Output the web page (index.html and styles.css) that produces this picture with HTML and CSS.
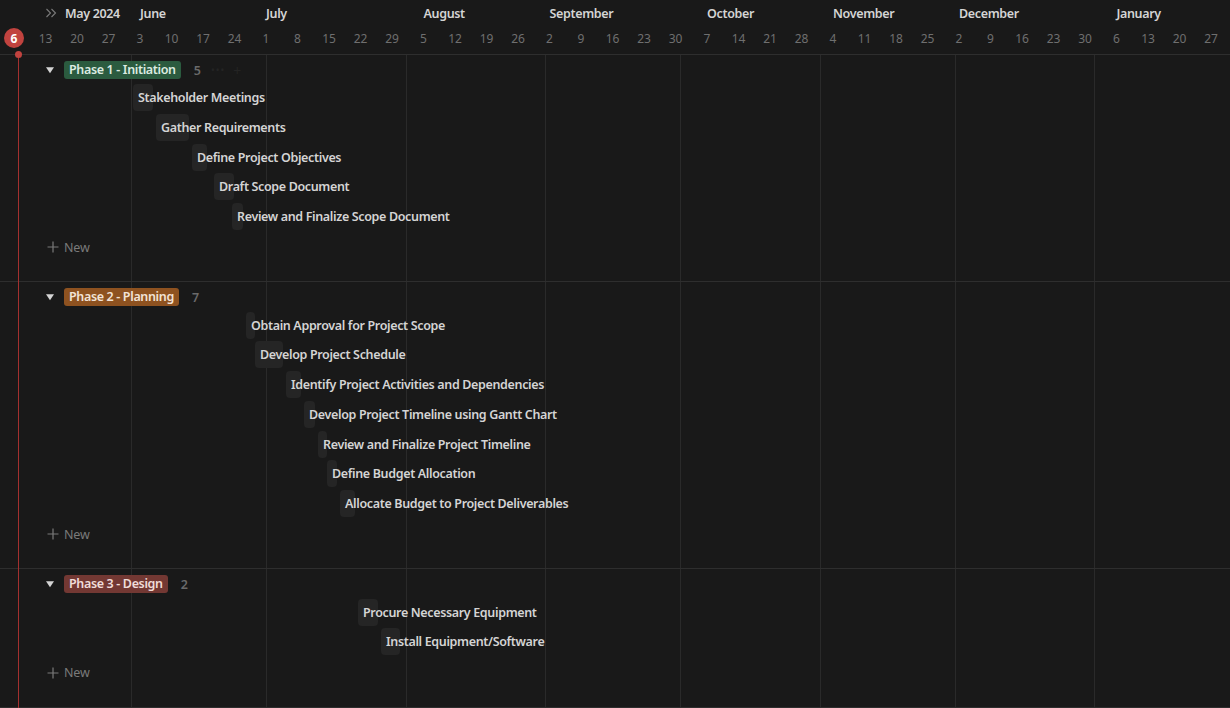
FILE: index.html
```html
<!DOCTYPE html>
<html lang="en">
<head>
<meta charset="utf-8">
<title>Timeline</title>
<link rel="stylesheet" href="styles.css">
</head>
<body>
<div class="app">
  <header class="header">
    <div class="months">
      <div class="month first" style="width:131px;padding-left:45px">
        <svg class="chev" width="12" height="12" viewBox="0 0 12 12"><path d="M1.5 2 L5.5 6 L1.5 10 M6.5 2 L10.5 6 L6.5 10" fill="none" stroke="#7a7a7a" stroke-width="1.1"/></svg>
        <span class="mlabel">May 2024</span>
      </div>
      <div class="month" style="width:135px;padding-left:9px"><span class="mlabel">June</span></div>
      <div class="month" style="width:139.5px;padding-left:0px"><span class="mlabel">July</span></div>
      <div class="month" style="width:139.5px;padding-left:18px"><span class="mlabel">August</span></div>
      <div class="month" style="width:135px;padding-left:4.5px"><span class="mlabel">September</span></div>
      <div class="month" style="width:139.5px;padding-left:27px"><span class="mlabel">October</span></div>
      <div class="month" style="width:135px;padding-left:13.5px"><span class="mlabel">November</span></div>
      <div class="month" style="width:139.5px;padding-left:4.5px"><span class="mlabel">December</span></div>
      <div class="month" style="width:136px;padding-left:22.5px"><span class="mlabel">January</span></div>
    </div>
    <div class="weeks">
      <div class="wk"><span class="today">6</span></div>
      <div class="wk">13</div><div class="wk">20</div><div class="wk">27</div>
      <div class="wk">3</div><div class="wk">10</div><div class="wk">17</div><div class="wk">24</div>
      <div class="wk">1</div><div class="wk">8</div><div class="wk">15</div><div class="wk">22</div><div class="wk">29</div>
      <div class="wk">5</div><div class="wk">12</div><div class="wk">19</div><div class="wk">26</div>
      <div class="wk">2</div><div class="wk">9</div><div class="wk">16</div><div class="wk">23</div><div class="wk">30</div>
      <div class="wk">7</div><div class="wk">14</div><div class="wk">21</div><div class="wk">28</div>
      <div class="wk">4</div><div class="wk">11</div><div class="wk">18</div><div class="wk">25</div>
      <div class="wk">2</div><div class="wk">9</div><div class="wk">16</div><div class="wk">23</div><div class="wk">30</div>
      <div class="wk">6</div><div class="wk">13</div><div class="wk">20</div><div class="wk">27</div>
    </div>
  </header>

  <main class="body">
    <div class="gridlines">
      <div class="gcol" style="width:131px"></div>
      <div class="gcol line" style="width:135px"></div>
      <div class="gcol line" style="width:139.5px"></div>
      <div class="gcol line" style="width:139.5px"></div>
      <div class="gcol line" style="width:135px"></div>
      <div class="gcol line" style="width:139.5px"></div>
      <div class="gcol line" style="width:135px"></div>
      <div class="gcol line" style="width:139.5px"></div>
      <div class="gcol line" style="width:136px"></div>
    </div>
    <div class="nowline"></div>

    <section class="group">
      <div class="ghead">
        <svg class="tri" width="8" height="8" viewBox="0 0 8 8"><path d="M0 1.2 H8 L4 7.2 Z" fill="#d4d4d4"/></svg>
        <span class="tag green">Phase 1 - Initiation</span>
        <span class="count">5</span>
        <span class="ghost">&bull;&bull;&bull;</span>
        <span class="ghost plus">+</span>
      </div>
      <div class="task"><div class="bar" style="margin-left:133px;width:20px">Stakeholder Meetings</div></div>
      <div class="task"><div class="bar" style="margin-left:156px;width:33px">Gather Requirements</div></div>
      <div class="task"><div class="bar" style="margin-left:192px;width:15px">Define Project Objectives</div></div>
      <div class="task"><div class="bar" style="margin-left:214px;width:20px">Draft Scope Document</div></div>
      <div class="task"><div class="bar" style="margin-left:232px;width:11px">Review and Finalize Scope Document</div></div>
      <div class="newrow">
        <svg width="12" height="12" viewBox="0 0 12 12"><path d="M6 0.5 V11.5 M0.5 6 H11.5" stroke="#7a7a7a" stroke-width="1.2"/></svg>
        <span>New</span>
      </div>
    </section>

    <section class="group">
      <div class="ghead">
        <svg class="tri" width="8" height="8" viewBox="0 0 8 8"><path d="M0 1.2 H8 L4 7.2 Z" fill="#d4d4d4"/></svg>
        <span class="tag orange">Phase 2 - Planning</span>
        <span class="count">7</span>
      </div>
      <div class="task"><div class="bar" style="margin-left:246px;width:9px">Obtain Approval for Project Scope</div></div>
      <div class="task"><div class="bar" style="margin-left:255px;width:28px">Develop Project Schedule</div></div>
      <div class="task"><div class="bar" style="margin-left:286px;width:15px">Identify Project Activities and Dependencies</div></div>
      <div class="task"><div class="bar" style="margin-left:304px;width:11px">Develop Project Timeline using Gantt Chart</div></div>
      <div class="task"><div class="bar" style="margin-left:318px;width:9px">Review and Finalize Project Timeline</div></div>
      <div class="task"><div class="bar" style="margin-left:327px;width:10px">Define Budget Allocation</div></div>
      <div class="task"><div class="bar" style="margin-left:340px;width:15px">Allocate Budget to Project Deliverables</div></div>
      <div class="newrow">
        <svg width="12" height="12" viewBox="0 0 12 12"><path d="M6 0.5 V11.5 M0.5 6 H11.5" stroke="#7a7a7a" stroke-width="1.2"/></svg>
        <span>New</span>
      </div>
    </section>

    <section class="group">
      <div class="ghead">
        <svg class="tri" width="8" height="8" viewBox="0 0 8 8"><path d="M0 1.2 H8 L4 7.2 Z" fill="#d4d4d4"/></svg>
        <span class="tag red">Phase 3 - Design</span>
        <span class="count">2</span>
      </div>
      <div class="task"><div class="bar" style="margin-left:358px;width:20px">Procure Necessary Equipment</div></div>
      <div class="task"><div class="bar" style="margin-left:381px;width:19px">Install Equipment/Software</div></div>
      <div class="newrow">
        <svg width="12" height="12" viewBox="0 0 12 12"><path d="M6 0.5 V11.5 M0.5 6 H11.5" stroke="#7a7a7a" stroke-width="1.2"/></svg>
        <span>New</span>
      </div>
    </section>
  </main>
</div>
</body>
</html>
```

FILE: styles.css
```css
* { box-sizing: border-box; }
html, body {
  margin: 0;
  padding: 0;
  background: #191919;
}
body {
  font-family: "Noto Sans", "Open Sans", sans-serif;
  color: #d4d4d4;
  width: 1230px;
  height: 708px;
  overflow: hidden;
}
.app {
  width: 1230px;
  height: 708px;
  display: flex;
  flex-direction: column;
  overflow: hidden;
}
.header {
  flex: none;
  height: 55px;
  padding-bottom: 4px;
  border-bottom: 1px solid #2e2e2e;
}
.months {
  display: flex;
  height: 26px;
  align-items: center;
  white-space: nowrap;
}
.month {
  flex: none;
  display: flex;
  align-items: center;
  height: 26px;
}
.chev { flex: none; margin-right: 8px; }
.mlabel {
  font-size: 12.5px;
  font-weight: 600;
  color: #d4d4d4;
  letter-spacing: -0.35px;
}
.weeks {
  display: flex;
  height: 24px;
  align-items: center;
  margin-left: -1.75px;
}
.wk {
  flex: none;
  width: 31.5px;
  text-align: center;
  font-size: 12px;
  color: #6f6f6f;
  display: flex;
  justify-content: center;
  align-items: center;
}
.today {
  display: flex;
  align-items: center;
  justify-content: center;
  width: 20px;
  height: 20px;
  border-radius: 50%;
  background: #c1433f;
  color: #fff;
  font-weight: 700;
  font-size: 12px;
}
.body {
  flex: 1;
  position: relative;
}
.gridlines {
  position: absolute;
  inset: 0;
  display: flex;
  z-index: 0;
}
.gcol { flex: none; height: 100%; }
.gcol.line { border-left: 1px solid #2a2a2a; }
.nowline {
  position: absolute;
  left: 17.5px;
  top: -1px;
  bottom: 0;
  width: 1px;
  background: #a3302f;
  z-index: 3;
}
.nowline::before {
  content: "";
  position: absolute;
  left: -3px;
  top: -3.5px;
  width: 7px;
  height: 7px;
  border-radius: 50%;
  background: #c1433f;
}
.group {
  position: relative;
  z-index: 1;
  padding-bottom: 18px;
  border-bottom: 1px solid #2e2e2e;
}
.ghead {
  height: 28px;
  padding-top: 2px;
  display: flex;
  align-items: center;
  padding-left: 46px;
}
.tri { flex: none; margin-right: 10px; }
.tag {
  height: 18px;
  line-height: 18px;
  padding: 0 5px;
  border-radius: 3px;
  font-size: 12.5px;
  font-weight: 600;
  letter-spacing: -0.35px;
  white-space: nowrap;
}
.tag.green { background: #2b5b3f; color: #dcebe1; }
.tag.orange { background: #8e5220; color: #f2e3d6; }
.tag.red { background: #733833; color: #f0dcd9; }
.count {
  margin-left: 13px;
  font-size: 12.5px;
  font-weight: 600;
  color: #6a6a6a;
}
.ghost {
  margin-left: 10px;
  font-size: 10px;
  color: #242424;
  letter-spacing: 1px;
}
.ghost.plus { font-size: 14px; margin-left: 8px; }
.task {
  height: 29.7px;
  display: flex;
  align-items: center;
}
.bar {
  flex: none;
  height: 27px;
  border-radius: 4px;
  background: #252525;
  padding-left: 5px;
  display: flex;
  align-items: center;
  white-space: nowrap;
  overflow: visible;
  font-size: 12.5px;
  font-weight: 600;
  letter-spacing: -0.35px;
  color: #d4d4d4;
}
.newrow {
  height: 32px;
  display: flex;
  align-items: center;
  padding-left: 47px;
  gap: 5px;
  font-size: 12.5px;
  letter-spacing: -0.2px;
  color: #7a7a7a;
}
```
